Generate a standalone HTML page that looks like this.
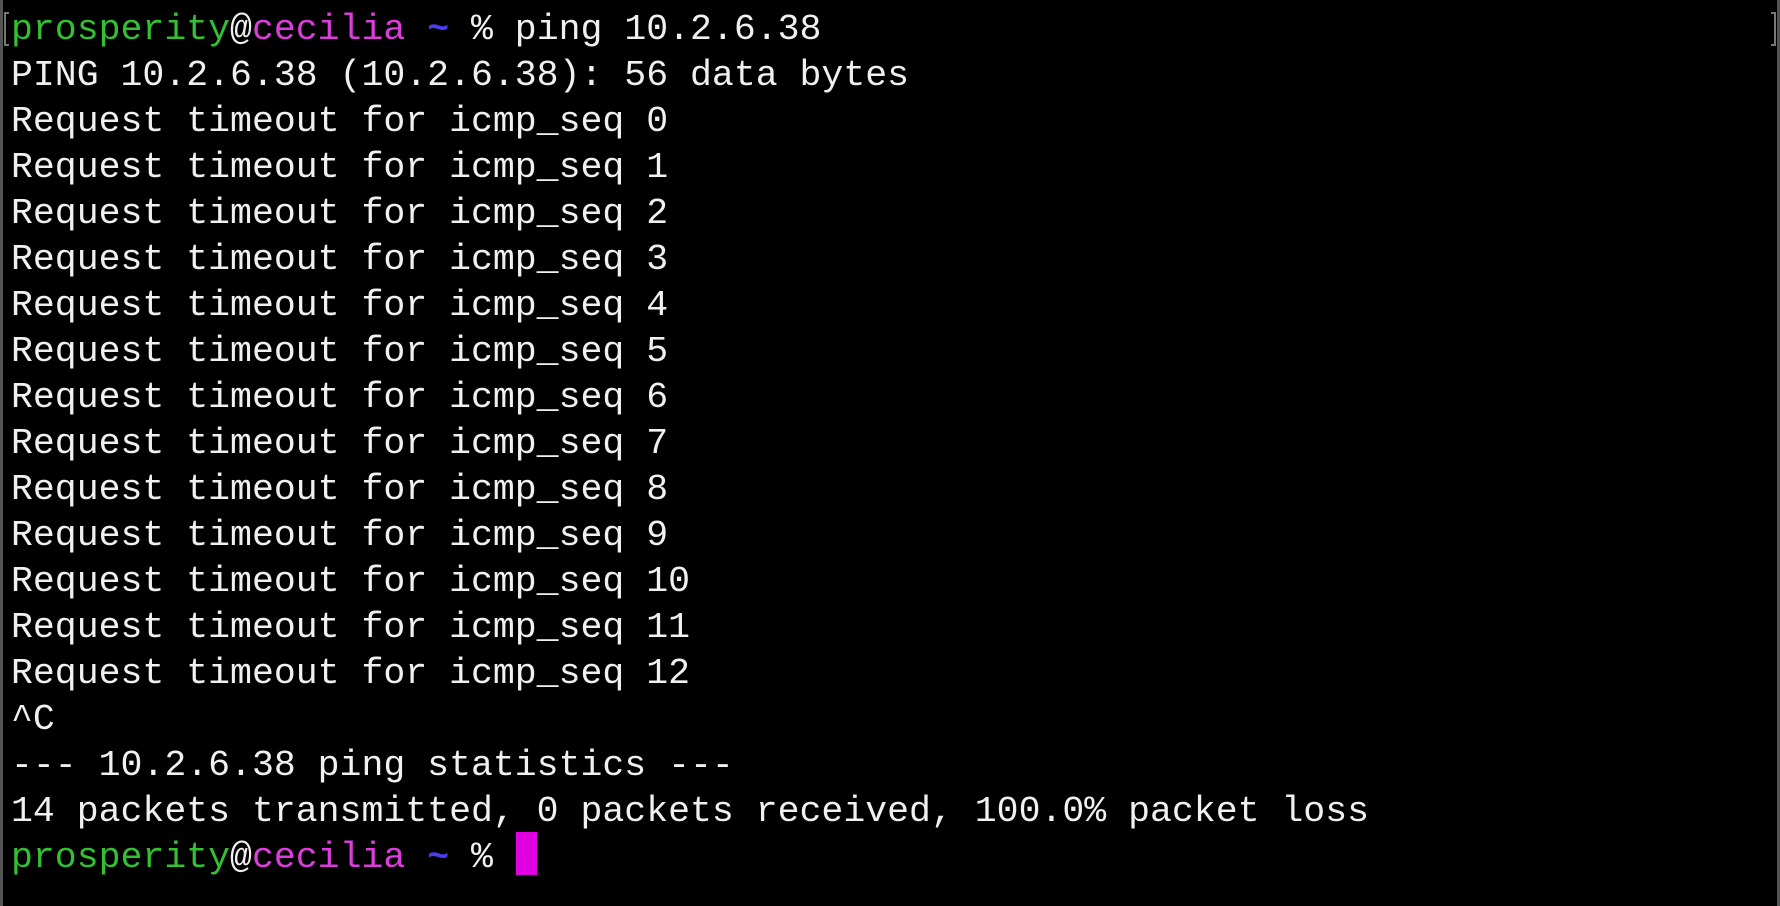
<!DOCTYPE html>
<html><head><meta charset="utf-8"><style>
html,body{margin:0;padding:0;background:#000;width:1780px;height:906px;overflow:hidden}
body{position:relative}
.l{position:absolute;left:0;top:0;width:3px;height:906px;background:#555}
.r{position:absolute;right:0;top:0;width:3px;height:906px;background:#555}
.bl{position:absolute;left:4px;top:12px;width:3px;height:30px;border:2px solid #777;border-right:none}
.br{position:absolute;left:1771px;top:12px;width:3px;height:30px;border:2px solid #777;border-left:none}
pre{position:absolute;left:11px;top:7px;margin:0;font-family:"Liberation Mono",monospace;font-size:36.5px;line-height:46px;color:#f0f0f0;white-space:pre}
.g{color:#33c133}.m{color:#dd3ddd}.b{color:#4a3df0;font-weight:bold}
.cur{position:absolute;left:516px;top:832px;width:21px;height:43px;background:#e000e0}
</style></head><body>
<div class="l"></div><div class="r"></div><div class="bl"></div><div class="br"></div>
<pre><span class="g">prosperity</span>@<span class="m">cecilia</span> <span class="b">~</span> % ping 10.2.6.38
PING 10.2.6.38 (10.2.6.38): 56 data bytes
Request timeout for icmp_seq 0
Request timeout for icmp_seq 1
Request timeout for icmp_seq 2
Request timeout for icmp_seq 3
Request timeout for icmp_seq 4
Request timeout for icmp_seq 5
Request timeout for icmp_seq 6
Request timeout for icmp_seq 7
Request timeout for icmp_seq 8
Request timeout for icmp_seq 9
Request timeout for icmp_seq 10
Request timeout for icmp_seq 11
Request timeout for icmp_seq 12
^C
--- 10.2.6.38 ping statistics ---
14 packets transmitted, 0 packets received, 100.0% packet loss
<span class="g">prosperity</span>@<span class="m">cecilia</span> <span class="b">~</span> % </pre>
<div class="cur"></div>
</body></html>
